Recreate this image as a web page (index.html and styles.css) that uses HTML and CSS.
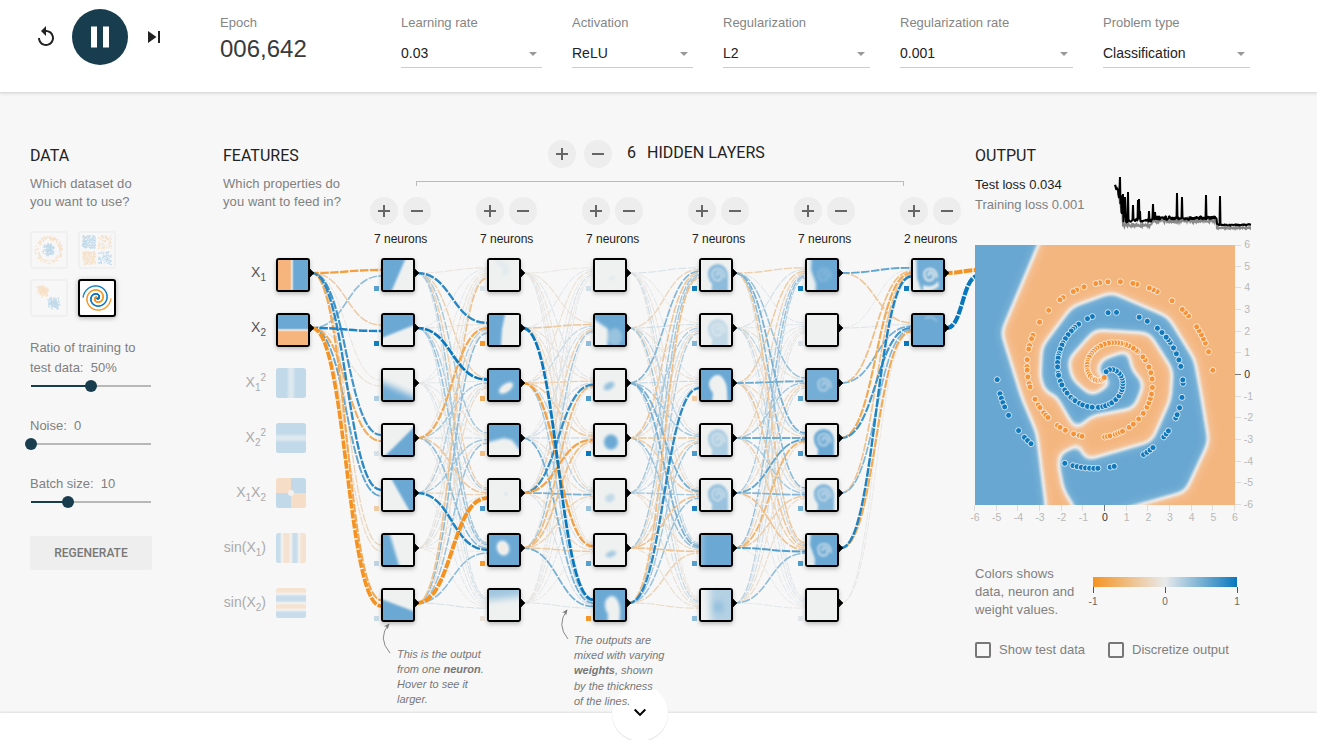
FILE: index.html
```html
<!DOCTYPE html>
<html lang="en">
<head>
<meta charset="utf-8">
<title>Neural Network Playground</title>
<link rel="stylesheet" href="styles.css">
</head>
<body>
<header class="top">
  <div class="timeline">
    <svg class="icon-reset" viewBox="0 0 24 24"><path d="M12 5V1L7 6l5 5V7c3.31 0 6 2.69 6 6s-2.69 6-6 6-6-2.69-6-6H4c0 4.42 3.58 8 8 8s8-3.58 8-8-3.58-8-8-8z"/></svg>
    <div class="play"><svg viewBox="0 0 24 24"><path d="M6 19h4V5H6v14zm8-14v14h4V5h-4z"/></svg></div>
    <svg class="icon-step" viewBox="0 0 24 24"><path d="M6 18l8.5-6L6 6v12zM16 6v12h2V6h-2z"/></svg>
  </div>
  <div class="epoch"><label>Epoch</label><div class="count">006,642</div></div>
  <div class="control w-rate"><label>Learning rate</label><div class="select">0.03<i></i></div></div>
  <div class="control w-act"><label>Activation</label><div class="select">ReLU<i></i></div></div>
  <div class="control w-reg"><label>Regularization</label><div class="select">L2<i></i></div></div>
  <div class="control w-regrate"><label>Regularization rate</label><div class="select">0.001<i></i></div></div>
  <div class="control w-prob"><label>Problem type</label><div class="select">Classification<i></i></div></div>
</header>

<main class="main">
  <section class="data">
    <h4>Data</h4>
    <p class="sub">Which dataset do<br>you want to use?</p>
    <div class="datasets">
      <svg class="thumb" id="ds-circle" viewBox="0 0 34 34"></svg>
      <svg class="thumb" id="ds-xor" viewBox="0 0 34 34"></svg>
      <svg class="thumb" id="ds-gauss" viewBox="0 0 34 34"></svg>
      <svg class="thumb selected" id="ds-spiral" viewBox="0 0 34 34"></svg>
    </div>
    <div class="slider"><p>Ratio of training to<br>test data:&nbsp; 50%</p><div class="track v50"><b></b></div></div>
    <div class="slider"><p>Noise:&nbsp; 0</p><div class="track v0"><b></b></div></div>
    <div class="slider"><p>Batch size:&nbsp; 10</p><div class="track v10"><b></b></div></div>
    <div class="regen">Regenerate</div>
  </section>

  <section class="network">
    <div class="features">
      <h4>Features</h4>
      <p class="sub">Which properties do<br>you want to feed in?</p>
      <div class="labels">
        <span class="on">X<sub>1</sub></span>
        <span class="on">X<sub>2</sub></span>
        <span>X<sub>1</sub><sup>2</sup></span>
        <span>X<sub>2</sub><sup>2</sup></span>
        <span>X<sub>1</sub>X<sub>2</sub></span>
        <span>sin(X<sub>1</sub>)</span>
        <span>sin(X<sub>2</sub>)</span>
      </div>
    </div>
    <div class="hidden">
      <div class="layers-title">
        <div class="round plus"></div><div class="round"></div>
        <span class="num">6</span><h4>Hidden layers</h4>
      </div>
      <div class="bracket"></div>
      <div class="layer-controls">
        <div class="layer"><div class="pair"><div class="round plus"></div><div class="round"></div></div>7 neurons</div>
        <div class="layer"><div class="pair"><div class="round plus"></div><div class="round"></div></div>7 neurons</div>
        <div class="layer"><div class="pair"><div class="round plus"></div><div class="round"></div></div>7 neurons</div>
        <div class="layer"><div class="pair"><div class="round plus"></div><div class="round"></div></div>7 neurons</div>
        <div class="layer"><div class="pair"><div class="round plus"></div><div class="round"></div></div>7 neurons</div>
        <div class="layer"><div class="pair"><div class="round plus"></div><div class="round"></div></div>2 neurons</div>
      </div>
    </div>
    <svg class="graph" id="graph" viewBox="223 93 752 620">
      <defs>
        <filter id="f0" x="-50%" y="-50%" width="200%" height="200%" color-interpolation-filters="sRGB">
          <feGaussianBlur stdDeviation="0.5"/>
          <feComponentTransfer><feFuncR type="table" tableValues="0.965 0.943 0.42"/><feFuncG type="table" tableValues="0.71 0.9 0.665"/><feFuncB type="table" tableValues="0.49 0.86 0.835"/></feComponentTransfer>
        </filter>
        <filter id="f1" x="-50%" y="-50%" width="200%" height="200%" color-interpolation-filters="sRGB">
          <feGaussianBlur stdDeviation="1"/>
          <feComponentTransfer><feFuncR type="table" tableValues="0.965 0.943 0.42"/><feFuncG type="table" tableValues="0.71 0.95 0.665"/><feFuncB type="table" tableValues="0.49 0.945 0.835"/></feComponentTransfer>
        </filter>
        <filter id="f2" x="-50%" y="-50%" width="200%" height="200%" color-interpolation-filters="sRGB">
          <feGaussianBlur stdDeviation="1.6"/>
          <feComponentTransfer><feFuncR type="table" tableValues="0.965 0.943 0.42"/><feFuncG type="table" tableValues="0.71 0.95 0.665"/><feFuncB type="table" tableValues="0.49 0.945 0.835"/></feComponentTransfer>
        </filter>
        <filter id="f3" x="-50%" y="-50%" width="200%" height="200%" color-interpolation-filters="sRGB">
          <feGaussianBlur stdDeviation="3.5"/>
          <feComponentTransfer><feFuncR type="table" tableValues="0.965 0.943 0.42"/><feFuncG type="table" tableValues="0.71 0.95 0.665"/><feFuncB type="table" tableValues="0.49 0.945 0.835"/></feComponentTransfer>
        </filter>
        <filter id="shadow" x="-40%" y="-40%" width="180%" height="190%"><feDropShadow dx="0" dy="2" stdDeviation="2" flood-opacity="0.25"/></filter>
        <clipPath id="cell"><rect width="30" height="30"/></clipPath>
        <clipPath id="cellround"><rect width="30" height="30" rx="2.5"/></clipPath>
        <marker id="arrow" viewBox="0 0 10 10" refX="8" refY="5" markerWidth="7" markerHeight="7" orient="auto"><path d="M1 1.5L9 5L1 8.5L3 5z" fill="#777"/></marker>
      </defs>
    </svg>
    <p class="callout c1">This is the output<br>from one <b>neuron</b>.<br>Hover to see it<br>larger.</p>
    <p class="callout c2">The outputs are<br>mixed with varying<br><b>weights</b>, shown<br>by the thickness<br>of the lines.</p>
  </section>

  <section class="output">
    <h4>Output</h4>
    <div class="stats">
      <div><p class="test">Test loss 0.034</p><p class="train">Training loss 0.001</p></div>
      <svg class="loss" id="loss" viewBox="0 0 140 56"></svg>
    </div>
    <svg class="heat" id="heat" viewBox="-8 -8 290 292">
      <defs>
        <filter id="fh" filterUnits="userSpaceOnUse" x="-60" y="-60" width="900" height="900" color-interpolation-filters="sRGB">
          <feGaussianBlur stdDeviation="16"/>
          <feComponentTransfer><feFuncR type="table" tableValues="0.958 0.958 0.93 0.46 0.41"/><feFuncG type="table" tableValues="0.715 0.75 0.925 0.69 0.655"/><feFuncB type="table" tableValues="0.5 0.57 0.915 0.84 0.825"/></feComponentTransfer>
        </filter>
        <clipPath id="plot"><rect width="260" height="260"/></clipPath>
      </defs>
      <g clip-path="url(#plot)"><g transform="scale(.33333)"><g filter="url(#fh)">
        <rect x="-50" y="-50" width="880" height="880" fill="#000"/>
        <path fill="#fff" d="M-50-50H215L190 0L80 262L140 455L186 565L213 780V830H-50z"/>
        <path fill="#fff" d="M325 850L290 775L265 735L250 660L254 622L296 610L306 582L332 645L530 588L586 462L592 375L522 265L360 255L280 345L292 402L350 452L410 415L394 395L364 394L376 344L462 314L470 372L508 415L478 490L350 514L302 556L270 500L238 445L215 450L195 400L200 305L290 185L410 142L580 215L660 345L680 455L702 590L632 740L420 800z"/>
      </g></g></g>
    </svg>
    <div class="legend">
      <p>Colors shows<br>data, neuron and<br>weight values.</p>
      <div class="scale"><div class="bar"></div><div class="ticks"><span>-1</span><span>0</span><span>1</span></div></div>
    </div>
    <div class="checks"><span><i></i>Show test data</span><span><i></i>Discretize output</span></div>
  </section>
</main>
<footer class="foot"><div class="more"><svg viewBox="0 0 24 24"><path d="M7.41 7.84L12 12.42l4.59-4.58L18 9.25l-6 6-6-6z"/></svg></div></footer>
<script src="main.js"></script>
</body>
</html>
```
FILE: styles.css
```css
* { box-sizing: border-box; }
body { margin: 0; width: 1317px; height: 740px; overflow: hidden; background: #f7f7f7; font: 13px/18px "Liberation Sans", Arial, sans-serif; color: #808080; display: flex; flex-direction: column; }
p, h4 { margin: 0; }
svg { display: block; }
h4 { font: 400 16px/20px Roboto, sans-serif; color: #222; text-transform: uppercase; }

.top { height: 93px; flex: none; background: #fff; border-bottom: 1px solid #dcdcdc; box-shadow: 0 1px 3px rgba(0,0,0,.1); display: flex; align-items: flex-start; position: relative; z-index: 1; }
.timeline { width: 220px; padding: 9px 0 0 34px; display: flex; align-items: center; }
.icon-reset { width: 24px; height: 24px; fill: #222; }
.play { width: 56px; height: 56px; margin: 0 14px; border-radius: 50%; background: #183d4e; display: flex; align-items: center; justify-content: center; }
.play svg { width: 36px; height: 36px; fill: #fff; }
.icon-step { width: 24px; height: 24px; fill: #222; }
.epoch { width: 181px; padding-top: 14px; }
.count { font-size: 24px; line-height: 28px; color: #3a3a3a; margin-top: 3px; }
.top label { display: block; height: 18px; color: #858585; }
.control { padding-top: 14px; margin-right: 30px; }
.select { margin-top: 9px; height: 27px; padding-top: 3px; border-bottom: 1px solid #ccc; font-size: 14px; color: #222; display: flex; justify-content: space-between; }
.select i { border: 4.5px solid transparent; border-top-color: #999; border-bottom: 0; margin: 8px 5px 0 0; height: 4.5px; }
.w-rate { width: 141px; } .w-act { width: 121px; } .w-reg { width: 147px; } .w-regrate { width: 173px; } .w-prob { width: 147px; }

.main { height: 620px; flex: none; display: flex; }
.data { width: 223px; flex: none; padding: 53px 0 0 30px; }
.sub { margin-top: 9px; letter-spacing: .08px; }
.datasets { margin-top: 20px; display: grid; grid-template-columns: 38px 38px; gap: 10px; }
.thumb { width: 38px; height: 38px; border: 2px solid #d8d8d8; border-radius: 3px; opacity: .22; }
.thumb.selected { opacity: 1; border-color: #000; background: #fff; box-shadow: 0 1px 5px rgba(0,0,0,.3); }
.slider { height: 58px; }
.slider:nth-of-type(2) { margin-top: 21px; height: 79px; }
.slider:nth-of-type(2) p { line-height: 20px; }
.track { height: 2px; width: 120px; margin: 8px 0 0 1px; background: #b8b8b8; position: relative; }
.slider:nth-of-type(2) .track { margin-top: 7px; }
.track b { position: absolute; top: -5px; width: 12px; height: 12px; border-radius: 50%; background: #183d4e; }
.v50 { background: linear-gradient(90deg, #183d4e 60px, #b8b8b8 60px); } .v50 b { left: 54px; }
.v0 b { left: -6px; }
.v10 { background: linear-gradient(90deg, #183d4e 37px, #b8b8b8 37px); } .v10 b { left: 31px; }
.regen { margin-top: 3px; width: 122px; height: 34px; border-radius: 2px; background: #eee; font: 500 12px/34px Roboto, sans-serif; text-align: center; text-transform: uppercase; color: #777; }

.network { width: 752px; flex: none; position: relative; display: flex; }
.features { width: 145px; padding-top: 53px; white-space: nowrap; }
.labels { margin-top: 49px; width: 43px; display: flex; flex-direction: column; align-items: flex-end; }
.labels span { height: 55px; line-height: 24px; font-size: 14px; color: #aaa; }
.labels .on { color: #555; }
.labels sub, .labels sup { font-size: 10px; line-height: 0; }
.hidden { width: 607px; padding-top: 47px; }
.layers-title { display: flex; align-items: center; padding-left: 180px; height: 28px; }
.round { width: 28px; height: 28px; border-radius: 50%; background: linear-gradient(#666, #666) center / 12px 2px no-repeat #ededed; flex: none; }
.round.plus { background: linear-gradient(#666, #666) center / 12px 2px no-repeat, linear-gradient(#666, #666) center / 2px 12px no-repeat #ededed; }
.layers-title .round.plus { margin-right: 8px; }
.num { font: 16px/20px Roboto, sans-serif; color: #222; margin: -2px 11px 0 15px; }
.layers-title h4 { margin-top: -2px; }
.bracket { width: 488px; height: 5px; margin: 13px 0 0 48px; border: 1px solid #bbb; border-bottom: 0; }
.layer-controls { display: flex; margin-top: 11px; }
.layer { width: 106px; flex: none; padding-left: 6px; font-size: 12px; line-height: 18px; color: #222; }
.pair { display: flex; gap: 5px; margin-left: -4px; margin-bottom: 5px; }
.graph { position: absolute; left: 0; top: 0; width: 752px; height: 620px; }
.callout { position: absolute; z-index: 2; font-size: 11px; line-height: 15px; font-style: italic; color: #777; white-space: nowrap; }
.c1 { left: 174px; top: 554px; }
.c2 { left: 351px; top: 540px; line-height: 15.2px; }

.output { padding-top: 53px; width: 342px; flex: none; }
.stats { display: flex; margin-top: 9px; height: 62px; }
.stats > div { width: 136px; line-height: 20px; white-space: nowrap; }
.test { color: #222; }
.loss { width: 140px; height: 56px; margin-top: 0; }
.heat { width: 290px; height: 292px; margin-left: -8px; position: relative; }
.heat text { font-size: 10.5px; fill: #b8b8b8; }
.heat .zero { fill: #333; }
.legend { display: flex; margin-top: 36px; height: 54px; }
.legend p { width: 118px; letter-spacing: .06px; white-space: nowrap; }
.scale { width: 144px; padding-top: 12px; }
.bar { height: 10px; background: linear-gradient(90deg, #f59322, #e8eaeb 50%, #0877bd); }
.ticks { display: flex; justify-content: space-between; margin: 0 -10px; font-size: 10px; line-height: 14px; color: #666; }
.ticks span { width: 20px; text-align: center; }
.ticks span::before { content: ""; display: block; width: 1px; height: 6px; margin: 0 auto 2px; background: #555; }
.checks { display: flex; margin-top: 22px; white-space: nowrap; }
.checks span { display: flex; align-items: center; width: 133px; }
.checks i { width: 16px; height: 16px; border: 2px solid #777; border-radius: 2px; margin-right: 8px; }

.foot { flex: none; height: 27px; background: #fff; box-shadow: 0 -1px 2px rgba(0,0,0,.1); position: relative; }
.more { position: absolute; left: 612px; top: -28px; width: 56px; height: 56px; border-radius: 50%; background: #fff; box-shadow: 0 1px 1px rgba(0,0,0,.12); clip-path: inset(0 -3px -3px -3px); display: flex; align-items: center; justify-content: center; }
.more svg { width: 24px; height: 24px; }
```
FILE: main.js
```js
const NS = 'http://www.w3.org/2000/svg';
const add = (parent, tag, attrs, text) => {
  const e = document.createElementNS(NS, tag);
  for (const k in attrs) e.setAttribute(k, attrs[k]);
  if (text !== undefined) e.textContent = text;
  parent.appendChild(e);
  return e;
};
let seed = 7;
const rnd = () => (seed = (seed * 16807) % 2147483647) / 2147483647;
const ORANGE = [245, 147, 34], MID = [232, 234, 235], BLUE = [8, 119, 189];
const color = w => {
  const a = Math.min(1, Math.abs(w)), c = w < 0 ? ORANGE : BLUE;
  return `rgb(${MID.map((m, i) => Math.round(m + (c[i] - m) * a))})`;
};

/* Network: weights[layer][source][target] */
const weights = [
  [[-.85, -.35, -.06, .75, .85, -.25, -.75],
   [.4, .9, -.12, -.7, .6, -.2, -1.6]],
  [[-.08, .85, -.3, .3, -.3, .3, .08],
   [.04, -.12, 1.05, -.15, .25, .35, .1],
   [.03, -.06, .04, .06, -.06, .08, .03],
   [-.1, -.75, .3, .12, -.4, .4, .06],
   [-.08, .25, -.1, .3, -.25, .9, .04],
   [.05, -.12, .1, -.1, .06, -.04, -.05],
   [-.45, .4, -.2, .35, -1.8, .4, .08]],
  [[-.05, -.12, .06, -.1, .05, -.08, .04],
   [.05, -.4, -.1, -.12, -.2, -.15, 1.1],
   [-.12, .15, -.3, -.35, .2, -.85, .3],
   [-.03, .1, .12, .2, -.15, .08, .5],
   [.08, -.3, .8, -.8, .5, -.2, .1],
   [-.04, .3, -.55, -.5, -.25, -.35, .5],
   [.03, -.06, .05, -.08, .04, -.05, .06]],
  [[.08, -.05, .04, -.08, .06, .12, -.05],
   [-.25, .1, -.12, .2, -.2, .3, -.1],
   [.45, -.12, .15, .3, .5, .5, .15],
   [-.4, .25, -.15, -.4, -.35, .35, .1],
   [.3, .12, .05, .15, .3, -.2, -.12],
   [.3, -.2, .12, -.3, -.45, -.45, -.12],
   [-.5, .25, .85, .3, .35, -.3, -.15]],
  [[-.3, .06, .35, .5, .4, -.4, .05],
   [.1, .04, -.12, .2, -.15, .15, .03],
   [-.35, .05, .55, -.2, .12, -.4, .06],
   [-.25, -.06, .3, .55, .3, -.3, .03],
   [.25, .04, -.2, .6, .45, -.45, .04],
   [.35, -.08, -.25, -.6, -.35, .65, -.04],
   [.2, .05, .12, -.15, -.15, .4, .03]],
  [[.6, -.4], [.03, .06], [-.5, .5], [-.75, .75], [-.45, .45], [.9, -.75], [.03, -.05]]
];
const colX = [293, 398, 504, 610, 716, 822, 928];
const rowY = i => 273 + 55 * i;
const graph = document.getElementById('graph');
const gl = add(graph, 'g', { fill: 'none', 'stroke-dasharray': '8.6 1.4' });
const link = (x1, y1, x2, y2, w) => {
  const m = (x1 + x2) / 2;
  add(gl, 'path', {
    d: `M${x1} ${y1}C${m} ${y1} ${m} ${y2} ${x2} ${y2}`,
    stroke: color(w), 'stroke-width': (.9 + 1.7 * Math.abs(w)).toFixed(2), 'stroke-dashoffset': Math.floor(rnd() * 4)
  });
};
weights.forEach((mat, l) => {
  const n = mat.length, all = [];
  mat.forEach((row, s) => row.forEach((w, t) => all.push([s, t, w])));
  all.sort((a, b) => Math.abs(a[2]) - Math.abs(b[2]));
  all.forEach(([s, t, w]) => link(colX[l] + 19, rowY(s), colX[l + 1] - 17, rowY(t) + (s - (n - 1) / 2) / n * 12, w));
});
link(947, 273, 978, 270, -1.8);
link(947, 328, 978, 276, 1.9);

/* Node pictures in a 30x30 cell; grey 128 is zero, white is positive, black negative */
const Z = '#808080';
const g = v => { const c = Math.round(128 + 127 * v); return `rgb(${c},${c},${c})`; };
const path = (d, v, extra = '') => `<path d="${d}" fill="${g(v)}" ${extra}/>`;
const ell = (x, y, rx, ry, v, r = 0) => `<ellipse cx="${x}" cy="${y}" rx="${rx}" ry="${ry}" fill="${g(v)}" transform="rotate(${r} ${x} ${y})"/>`;
const curl = (v, w = 1.8) => `<path d="M16.5 16C14.5 15 15.5 11.5 18.5 12.5C22 14.5 21 20 17 20.5C11 21 9.5 11.5 14 9.5C20 7 24.5 12 23.5 18" fill="none" stroke="${g(v)}" stroke-width="${w}"/>`;
const blob = v => path('M10 40L11 24Q6 19 7 11Q10 4 17 4Q26 5 27 15V40z', v) + curl(v * .3, 1.5);
const F0 = 'f0', F1 = 'f1', F2 = 'f2', F3 = 'f3';
const nodes = [
  [[F1, 1, path('M-15-15H14V45H-15z', -1)], [F1, 1, path('M-15 15H45V45H-15z', -1)]],
  [[F1, 0, path('M-15-15H28L22 0L9 30L3 45H-15z', 1)],
   [F1, 0, path('M-15-15H45V4L30 10.5L0 22.5L-15 28z', 1)],
   [F3, 0, path('M-15 6L45 33V45H-15z', .95)],
   [F1, 0, path('M45-12V45H-12z', 1)],
   [F1, 0, path('M0-15H45V45H36L26 30L9 0z', 1)],
   [F2, 0, path('M-15-15H2L7 0L16 30L20 45H-15z', 1)],
   [F1, 0, path('M-15 4L30 21L45 27V45H-15z', 1)]],
  [[F2, 0, ell(13, 4, 9, 4, .07, 30) + ell(16, 12, 4, 4, .09)],
   [F1, 0, path('M-15-15H16V0L13 14L12 30V45H-15z', 1)],
   [F2, 1, ell(17, 18, 8, 4, -.1, -35)],
   [F2, 0, path('M-15-15H45V34L30 24L23 15L15 13L0 17H-15z', 1)],
   [F1, 0, ell(17, 14, 1.5, 2.5, .18)],
   [F2, 1, ell(14, 13, 6, 7.5, -.1, -20)],
   [F3, 0, path('M-15-15H45V5L-15 12z', .6)]],
  [[F2, 0, ell(17, 18, 4, 2, .1, -30)],
   [F2, 1, path('M-15-2L0 5L13 14L12 45H-15z', 0) + ell(20, 22, 7, 9, .65)],
   [F2, 0, ell(14, 16, 6, 3.5, .65, -30)],
   [F2, 0, ell(16, 17, 7, 7.5, 1)],
   [F2, 0, ell(15, 18, 5, 4, .35, -30)],
   [F2, 0, ell(16, 19, 5.5, 3, .55, -20)],
   [F2, 1, path('M12 45L13 24Q8 17 11 10Q15 4 20 7Q26 13 25 24L24 45z', 0)]],
  [[F1, 0, blob(.75)],
   [F1, 0, blob(.35)],
   [F1, 1, path('M10 45L12 23Q6 16 9 10Q14 3 20 6Q26 12 26 21L27 45z', 0)],
   [F1, 0, blob(.5)],
   [F1, 0, blob(.65)],
   [F2, 1, path('M-15-15H4V45H-15z', .82)],
   [F3, 0, path('M8-9H45V45H10z', .45) + ell(17, 17, 5, 5, .8)]],
  [[F2, 1, path('M-15-15H5L4 10L9 24L8 45H-15z', .05) + curl(.75)],
   [F1, 0, ''],
   [F1, .93, curl(.4)],
   [F1, 0, path('M10 40L11 24Q6 19 7 11Q10 4 17 4Q26 5 27 15V40z', 1) + curl(.25, 1.6)],
   [F1, 0, blob(.8)],
   [F1, 1, path('M-15-15H5L3 10L8 24L7 45H-15z', .1) + curl(.25)],
   [F1, 0, '']],
  [[F1, .95, path('M-15-15H3L4 18L9 32L-15 45zM10 25Q20 29 25 21L26 26Q20 32 10 31z', .05) + curl(-.02)],
   [F1, 1, '<path d="M12 4Q17-1 24 6" fill="none" stroke="#c8c8c8" stroke-width="1.5"/>']]
];
const picture = (x, y, [f, bg, body], clip = 'cell') =>
  `<g transform="translate(${x} ${y})" clip-path="url(#${clip})"><g filter="url(#${f})"><rect x="-15" y="-15" width="60" height="60" fill="${bg ? g(bg) : Z}"/>${body}</g></g>`;
const bias = [
  [.65, .95, .25, .08, -.35, .2, .15],
  [.06, -.95, -.7, -.5, .7, -.95, -.1],
  [.1, .4, .7, 1, .35, .65, -.95],
  [.95, .45, -.35, .7, .9, .65, .4],
  [.95, .06, .6, .7, .5, .7, .04],
  [.95, 1]
];
let html = '';
nodes.forEach((col, c) => col.forEach((n, r) => {
  const x = colX[c], y = rowY(r) + 2;
  html += `<g filter="url(#shadow)"><rect x="${x - 16}" y="${y - 16}" width="32" height="32" rx="2" fill="#f0f2f1" stroke="#000" stroke-width="2"/></g>`;
  html += picture(x - 15, y - 15, n);
  html += `<path d="M${x + 17} ${y - 6}L${x + 21} ${y - 2}L${x + 17} ${y + 2}z" stroke="#000" stroke-width=".6"/>`;
  if (c) html += `<rect x="${x - 24}" y="${y + 11}" width="5" height="5" fill="${color(bias[c - 1][r])}"/>`;
}));
const bars = (list, vertical) => list.map(([a, b, v]) =>
  vertical ? path(`M${a}-15H${b}V45H${a}z`, v) : path(`M-15 ${a}H45V${b}H-15z`, v)).join('');
[[F1, 1, bars([[12, 18, .45]], true)],
 [F1, 1, bars([[12, 18, .45]], false)],
 [F0, 1, path('M-15-15H15V15H-15zM15 15H45V45H15z', -1) + ell(15, 15, 3, 3, 0)],
 [F2, 1, bars([[-15, 6, .85], [6, 15, -.8], [15, 23, .85], [23, 45, -.8]], true)],
 [F2, 1, bars([[-15, 6, -.8], [6, 15, .85], [15, 22, -.8], [22, 45, .85]], false)]
].forEach((n, i) => { html += `<g opacity=".38">${picture(276, rowY(i + 2) - 15, n, 'cellround')}</g>`; });
html += '<path d="M390 653Q377 638 389 624" fill="none" stroke="#888" marker-end="url(#arrow)"/>';
html += '<path d="M568 639Q556 625 567 610" fill="none" stroke="#888" marker-end="url(#arrow)"/>';
graph.insertAdjacentHTML('beforeend', html);

/* Output plot: axes and training points */
const heat = document.getElementById('heat');
const S = 260 / 12;
for (let v = -6; v <= 6; v++) {
  const p = 130 + v * S, q = 130 - v * S, z = v === 0;
  const stroke = z ? '#777' : '#ddd';
  add(heat, 'path', { d: `M${Math.round(p) - .5} 260v6M260 ${Math.round(q) + (v === 6 ? .5 : -.5)}h6`, stroke, fill: 'none' });
  add(heat, 'text', { x: p, y: 276, 'text-anchor': 'middle', class: z ? 'zero' : '' }, v);
  add(heat, 'text', { x: 277, y: q + 3, 'text-anchor': 'end', class: z ? 'zero' : '', dx: v < 0 ? 1 : -2 }, v);
}
const orangePts = [249,245,243,242,241,240,239,236,235,234,231,227,226,225,222,221,218,215,213,212,209,207,206,203,202,198,194,190,189,187,186,183,181,180,178,176,175,171,169,168,166,165,164,160,159,157,154,152,151,143,142,141,139,138,137,136,133,131,128,125,122,120,118,116,113,109,106,103,99,97,93,92,90,87,85,83,82,80,78,76,74,71,68,65,63,61,59,57,55,52,50,48,45,42,40,37,34,30,27,25,21,17,14,10,6];
const bluePts = [249,246,245,244,243,241,237,235,234,233,224,222,221,220,219,218,217,216,213,212,204,203,202,201,197,196,195,191,190,188,185,181,180,176,174,172,170,168,167,166,164,162,158,155,147,144,138,136,132,130,129,128,126,124,122,121,119,117,116,115,113,111,108,107,104,102,99,97,94,92,91,88,86,83,80,76,73,71,68,66,62,58,54,52,49,46,43,40,37,33,28,22,16,8];
const dots = (list, phase, fill) => list.forEach(i => {
  const r = i / 250 * 5, t = 1.75 * i / 250 * 2 * Math.PI + phase;
  add(heat, 'circle', { cx: (130 + S * r * Math.sin(t)).toFixed(1), cy: (130 - S * r * Math.cos(t)).toFixed(1), r: 3, fill, stroke: '#fff', 'stroke-opacity': .75 });
});
dots(orangePts, Math.PI, '#f59338');
dots(bluePts, 0, '#1079bd');

/* Dataset thumbnails */
const put = (id, x, y, c) => add(document.getElementById(id), 'rect', { x: x - .6, y: y - .6, width: 1.2, height: 1.2, fill: c });
const O = '#f59322', B = '#0877bd';
for (let i = 0; i < 150; i++) {
  let a = rnd() * 6.283, r = rnd() * 6.5;
  put('ds-circle', 17 + r * Math.cos(a), 17 + r * Math.sin(a), B);
  a = rnd() * 6.283; r = 10 + rnd() * 4;
  put('ds-circle', 17 + r * Math.cos(a), 17 + r * Math.sin(a), O);
  for (let k = 0; k < 4; k += 2 - (i % 2)) {
    const x = rnd() * 13 + 1.5, y = rnd() * 13 + 1.5, q = (k + i) % 4;
    put('ds-xor', 17 + (q % 2 ? x : -x), 17 + (q > 1 ? y : -y), q === 0 || q === 3 ? B : O);
  }
  const n = () => (rnd() + rnd() + rnd() - 1.5) * 5;
  put('ds-gauss', 11 + n(), 10 + n(), O);
  put('ds-gauss', 22 + n(), 22 + n(), B);
}
for (let i = 3; i < 160; i++) {
  const r = i / 160 * 14, t = 3.5 * Math.PI * i / 160;
  put('ds-spiral', 17 + r * Math.sin(t), 17 - r * Math.cos(t) * -1, B);
  put('ds-spiral', 17 - r * Math.sin(t), 17 - r * Math.cos(t), O);
}

/* Loss curves */
const loss = document.getElementById('loss');
const spikes = { 5: 2, 8: 19, 10: 22, 13: 17, 18: 30, 23: 25, 24: 24, 25: 36, 34: 36, 38: 29, 40: 37, 62: 18, 67: 22, 91: 20, 105: 21 };
const curve = (off, noise, useSpikes) => {
  let d = '';
  for (let x = 0; x <= 136; x += .5) {
    let y = x < 3 ? 10 + x * 2 : x < 8 ? 16 + (x - 3) * 5.5 : x < 37 ? 46 : x < 102 ? 43 : 50;
    y += (x < 8 ? 0 : x < 37 ? off * 1.4 : off) + (rnd() - .5) * noise * (x > 103 ? .5 : 1);
    if (useSpikes && x > 3 && x < 12 && rnd() > .45) y -= 14 - x / 2;
    if (useSpikes && spikes[x]) y = spikes[x];
    d += (d ? 'L' : 'M') + (x + 4).toFixed(1) + ' ' + y.toFixed(1);
  }
  return d;
};
add(loss, 'path', { d: curve(3, 3, false), fill: 'none', stroke: '#888', 'stroke-width': 2 });
add(loss, 'path', { d: curve(0, 4, true), fill: 'none', stroke: '#000', 'stroke-width': 2, 'stroke-linejoin': 'bevel' });
```
